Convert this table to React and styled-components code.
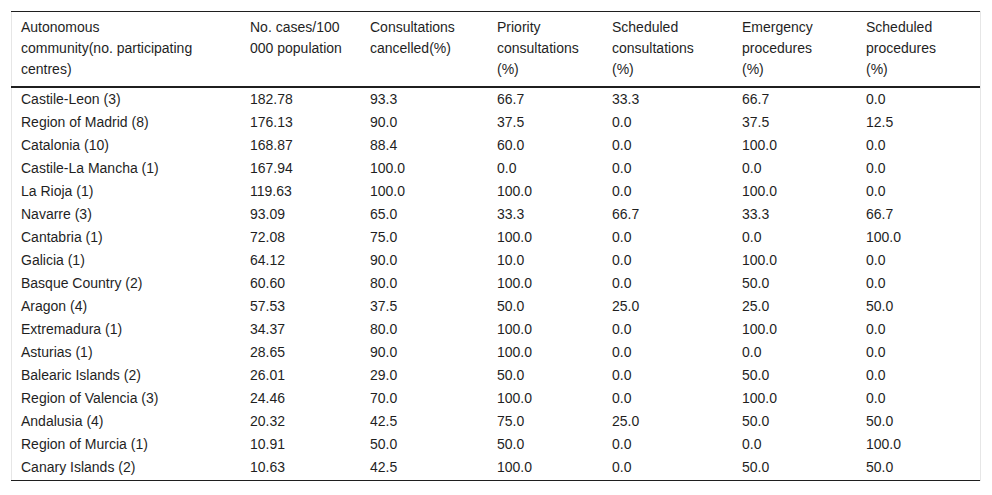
import React from "react"
import styled, { createGlobalStyle } from "styled-components"

const GlobalStyle = createGlobalStyle`
  body {
    margin: 0;
    background: #fff;
    font-family: "Liberation Sans", Arial, sans-serif;
  }
`

const Page = styled.div`
  padding: 11px 12px 11px 11px;
`

const TableWrap = styled.div`
  border-left: 1px solid #e6e6e6;
  border-right: 1px solid #e6e6e6;
  width: 970px;
  box-sizing: border-box;
`

const Table = styled.table`
  border-collapse: collapse;
  table-layout: fixed;
  font-size: 14px;
  color: #1f1f1f;
  margin-left: -1px;
  width: 969px;
`

const HeadRow = styled.tr`
  border-top: 1px solid #1f1f1f;
  border-bottom: 2px solid #1f1f1f;
`

const Th = styled.th`
  box-sizing: border-box;
  text-align: left;
  font-weight: normal;
  vertical-align: top;
  line-height: 21px;
  padding: 5px 10px 6px 10px;
  width: ${(p) => p.$w}px;
`

const Td = styled.td`
  line-height: 19px;
  padding: 2px 10px 2px 10px;
  vertical-align: top;
  white-space: nowrap;
`

const BodyRow = styled.tr`
  &:last-child {
    border-bottom: 1px solid #1f1f1f;
  }
  &:last-child td {
    padding-bottom: 3px;
  }
`

const columns = [
  { w: 229, label: ["Autonomous", "community(no. participating", "centres)"] },
  { w: 120, label: ["No. cases/100", "000 population"] },
  { w: 127, label: ["Consultations", "cancelled(%)"] },
  { w: 115, label: ["Priority", "consultations", "(%)"] },
  { w: 130, label: ["Scheduled", "consultations", "(%)"] },
  { w: 124, label: ["Emergency", "procedures", "(%)"] },
  { w: 124, label: ["Scheduled", "procedures", "(%)"] },
]

const rows = [
  ["Castile-Leon (3)", "182.78", "93.3", "66.7", "33.3", "66.7", "0.0"],
  ["Region of Madrid (8)", "176.13", "90.0", "37.5", "0.0", "37.5", "12.5"],
  ["Catalonia (10)", "168.87", "88.4", "60.0", "0.0", "100.0", "0.0"],
  ["Castile-La Mancha (1)", "167.94", "100.0", "0.0", "0.0", "0.0", "0.0"],
  ["La Rioja (1)", "119.63", "100.0", "100.0", "0.0", "100.0", "0.0"],
  ["Navarre (3)", "93.09", "65.0", "33.3", "66.7", "33.3", "66.7"],
  ["Cantabria (1)", "72.08", "75.0", "100.0", "0.0", "0.0", "100.0"],
  ["Galicia (1)", "64.12", "90.0", "10.0", "0.0", "100.0", "0.0"],
  ["Basque Country (2)", "60.60", "80.0", "100.0", "0.0", "50.0", "0.0"],
  ["Aragon (4)", "57.53", "37.5", "50.0", "25.0", "25.0", "50.0"],
  ["Extremadura (1)", "34.37", "80.0", "100.0", "0.0", "100.0", "0.0"],
  ["Asturias (1)", "28.65", "90.0", "100.0", "0.0", "0.0", "0.0"],
  ["Balearic Islands (2)", "26.01", "29.0", "50.0", "0.0", "50.0", "0.0"],
  ["Region of Valencia (3)", "24.46", "70.0", "100.0", "0.0", "100.0", "0.0"],
  ["Andalusia (4)", "20.32", "42.5", "75.0", "25.0", "50.0", "50.0"],
  ["Region of Murcia (1)", "10.91", "50.0", "50.0", "0.0", "0.0", "100.0"],
  ["Canary Islands (2)", "10.63", "42.5", "100.0", "0.0", "50.0", "50.0"],
]

export default function App() {
  return (
    <>
      <GlobalStyle />
      <Page>
        <TableWrap>
          <Table>
            <thead>
              <HeadRow>
                {columns.map((c, i) => (
                  <Th key={i} $w={c.w}>
                    {c.label.map((line, j) => (
                      <React.Fragment key={j}>
                        {j > 0 && <br />}
                        {line}
                      </React.Fragment>
                    ))}
                  </Th>
                ))}
              </HeadRow>
            </thead>
            <tbody>
              {rows.map((r, i) => (
                <BodyRow key={i}>
                  {r.map((cell, j) => (
                    <Td key={j}>{cell}</Td>
                  ))}
                </BodyRow>
              ))}
            </tbody>
          </Table>
        </TableWrap>
      </Page>
    </>
  )
}
